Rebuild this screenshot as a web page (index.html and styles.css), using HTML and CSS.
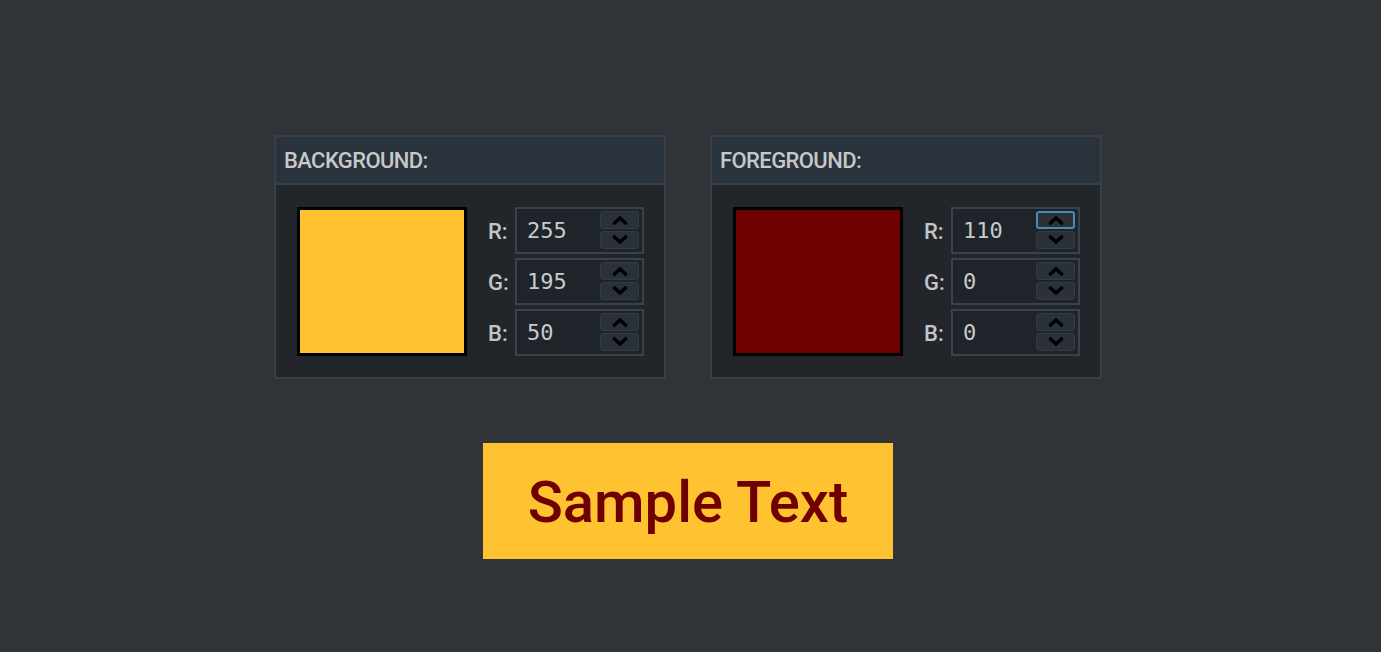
FILE: index.html
```html
<!DOCTYPE html>
<html>
<head>
<meta charset="utf-8">
<link rel="stylesheet" href="styles.css">
</head>
<body>
<div class="page">
  <div class="panels">
    <section class="panel">
      <header class="panel-head">BACKGROUND:</header>
      <div class="panel-body">
        <div class="swatch swatch-bg"></div>
        <div class="fields">
          <div class="row"><span class="lbl">R:</span><div class="num"><span class="val">255</span><div class="spin"><button class="btn"><svg viewBox="0 0 16 10" class="chev"><polyline points="2.5,8 8,3 13.5,8"/></svg></button><button class="btn"><svg viewBox="0 0 16 10" class="chev"><polyline points="2.5,2 8,7 13.5,2"/></svg></button></div></div></div>
          <div class="row"><span class="lbl">G:</span><div class="num"><span class="val">195</span><div class="spin"><button class="btn"><svg viewBox="0 0 16 10" class="chev"><polyline points="2.5,8 8,3 13.5,8"/></svg></button><button class="btn"><svg viewBox="0 0 16 10" class="chev"><polyline points="2.5,2 8,7 13.5,2"/></svg></button></div></div></div>
          <div class="row"><span class="lbl">B:</span><div class="num"><span class="val">50</span><div class="spin"><button class="btn"><svg viewBox="0 0 16 10" class="chev"><polyline points="2.5,8 8,3 13.5,8"/></svg></button><button class="btn"><svg viewBox="0 0 16 10" class="chev"><polyline points="2.5,2 8,7 13.5,2"/></svg></button></div></div></div>
        </div>
      </div>
    </section>
    <section class="panel">
      <header class="panel-head">FOREGROUND:</header>
      <div class="panel-body">
        <div class="swatch swatch-fg"></div>
        <div class="fields">
          <div class="row"><span class="lbl">R:</span><div class="num"><span class="val">110</span><div class="spin"><button class="btn btn-focus"><svg viewBox="0 0 16 10" class="chev"><polyline points="2.5,8 8,3 13.5,8"/></svg></button><button class="btn"><svg viewBox="0 0 16 10" class="chev"><polyline points="2.5,2 8,7 13.5,2"/></svg></button></div></div></div>
          <div class="row"><span class="lbl">G:</span><div class="num"><span class="val">0</span><div class="spin"><button class="btn"><svg viewBox="0 0 16 10" class="chev"><polyline points="2.5,8 8,3 13.5,8"/></svg></button><button class="btn"><svg viewBox="0 0 16 10" class="chev"><polyline points="2.5,2 8,7 13.5,2"/></svg></button></div></div></div>
          <div class="row"><span class="lbl">B:</span><div class="num"><span class="val">0</span><div class="spin"><button class="btn"><svg viewBox="0 0 16 10" class="chev"><polyline points="2.5,8 8,3 13.5,8"/></svg></button><button class="btn"><svg viewBox="0 0 16 10" class="chev"><polyline points="2.5,2 8,7 13.5,2"/></svg></button></div></div></div>
        </div>
      </div>
    </section>
  </div>
  <div class="sample">Sample Text</div>
</div>
</body>
</html>
```
FILE: styles.css
```css
* { box-sizing: border-box; }
html, body { margin: 0; padding: 0; }
body {
  background: #303338;
  width: 1381px;
  height: 652px;
  overflow: hidden;
  font-family: Roboto, "Liberation Sans", sans-serif;
}
.page {
  display: flex;
  flex-direction: column;
  align-items: center;
  padding-top: 135px;
  padding-right: 5px;
}
.panels {
  display: flex;
  gap: 44px;
}
.panel {
  width: 392px;
  height: 244px;
  border: 2px solid #373f47;
  background: #22262b;
  display: flex;
  flex-direction: column;
}
.panel-head {
  height: 48px;
  background: #2a323b;
  border-bottom: 2px solid #373f47;
  color: #c6c8ca;
  font-size: 22px;
  font-weight: 500;
  padding-left: 8px;
  padding-top: 11px;
  line-height: 26px;
  letter-spacing: -0.6px;
}
.panel-body {
  flex: 1;
  display: flex;
  padding: 22px 20px 21px 21px;
  gap: 21px;
}
.swatch {
  width: 170px;
  height: 149px;
  border: 3px solid #000;
}
.swatch-bg { background: #ffc332; }
.swatch-fg { background: #6e0000; }
.fields {
  display: flex;
  flex-direction: column;
  gap: 4px;
}
.row {
  display: flex;
  align-items: center;
  height: 47px;
}
.lbl {
  width: 27px;
  color: #c3c5c7;
  font-size: 22px;
  font-weight: 500;
  line-height: 24px;
  padding-top: 3px;
}
.num {
  width: 129px;
  height: 47px;
  border: 2px solid #3a424b;
  background: #1e242a;
  display: flex;
  align-items: center;
  justify-content: space-between;
  padding: 2px 3px 3px 10px;
}
.val {
  color: #c8cacc;
  font-family: "DejaVu Sans Mono", "Liberation Mono", monospace;
  font-size: 22px;
  line-height: 24px;
  padding-top: 2px;
}
.spin {
  display: flex;
  flex-direction: column;
  gap: 2px;
  align-self: stretch;
}
.btn {
  width: 39px;
  height: 18px;
  margin: 0;
  padding: 0;
  border: 1px solid #333b43;
  border-radius: 3px;
  background: #2a3139;
  display: flex;
  align-items: center;
  justify-content: center;
}
.btn-focus {
  border: 2px solid #4a8bb5;
}
.chev {
  width: 16px;
  height: 10px;
  display: block;
}
.chev polyline {
  fill: none;
  stroke: #000;
  stroke-width: 3.6;
  stroke-linecap: round;
  stroke-linejoin: round;
}
.sample {
  margin-top: 64px;
  width: 410px;
  height: 116px;
  background: #ffc332;
  color: #6e0000;
  font-size: 58px;
  font-weight: 500;
  display: flex;
  align-items: center;
  justify-content: center;
  padding-top: 2px;
}
```
